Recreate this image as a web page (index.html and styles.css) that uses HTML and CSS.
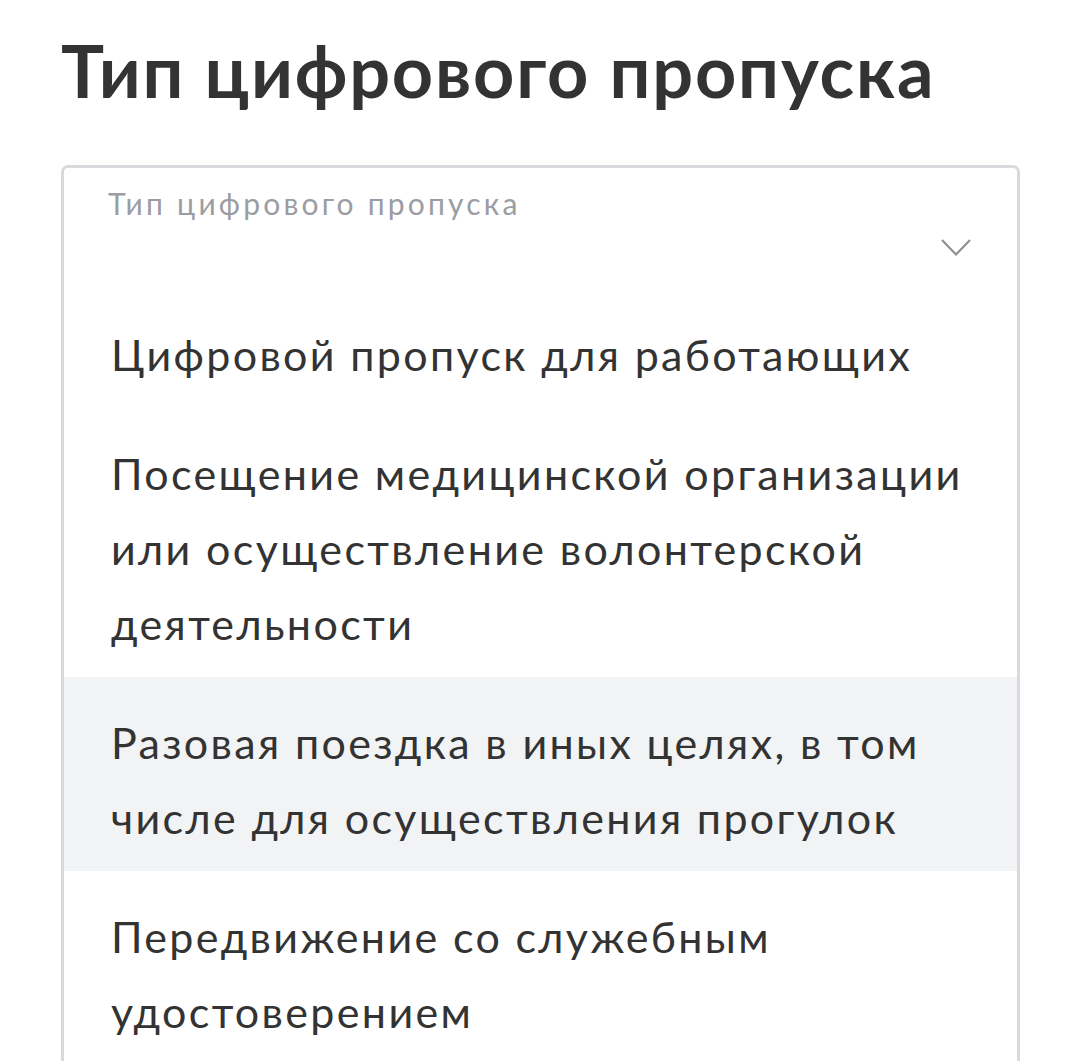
FILE: index.html
```html
<!DOCTYPE html>
<html lang="ru">
<head>
<meta charset="utf-8">
<link rel="stylesheet" href="styles.css">
</head>
<body>
<div class="page">
  <h1 class="title">Тип цифрового пропуска</h1>
  <div class="select">
    <div class="select-head">
      <div class="label">Тип цифрового пропуска</div>
      <svg class="chevron" viewBox="0 0 30 18" width="30" height="18"><path d="M1 1 L15 15.5 L29 1" fill="none" stroke="#8e9096" stroke-width="2.2"/></svg>
    </div>
    <ul class="options">
      <li class="option">Цифровой пропуск для работающих</li>
      <li class="option">Посещение медицинской организации или осуществление волонтерской деятельности</li>
      <li class="option active">Разовая поездка в иных целях, в том числе для осуществления прогулок</li>
      <li class="option">Передвижение со служебным удостоверением</li>
    </ul>
  </div>
</div>
</body>
</html>
```

FILE: styles.css
```css
html, body {
  margin: 0;
  padding: 0;
  background: #ffffff;
}
body {
  font-family: "Lato", "Open Sans", "Noto Sans", sans-serif;
  color: #333333;
  overflow: hidden;
  height: 1061px;
}
.page {
  padding: 0 48px 0 61px;
  height: 1061px;
  overflow: hidden;
}
.title {
  margin: 0;
  padding-top: 22px;
  height: 165px;
  box-sizing: border-box;
  font-size: 72px;
  font-weight: 700;
  line-height: 96px;
  color: #333333;
  letter-spacing: 1.8px;
}
.select {
  border: 3px solid #d9dadd;
  border-bottom: none;
  border-radius: 7px 7px 0 0;
  width: 959px;
  height: 896px;
  box-sizing: border-box;
  overflow: hidden;
}
.select-head {
  height: 121px;
  padding: 17px 0 0 44px;
  box-sizing: border-box;
  position: relative;
}
.label {
  font-size: 30px;
  line-height: 36px;
  color: #9b9da3;
  letter-spacing: 3.2px;
}
.chevron {
  position: absolute;
  right: 46px;
  top: 71px;
}
.options {
  list-style: none;
  margin: 0;
  padding: 0;
}
.option {
  padding: 28px 40px 16px 47px;
  font-size: 43px;
  line-height: 75px;
  color: #333333;
  letter-spacing: 2.35px;
}
.option.active {
  background: #f2f3f5;
}
```
